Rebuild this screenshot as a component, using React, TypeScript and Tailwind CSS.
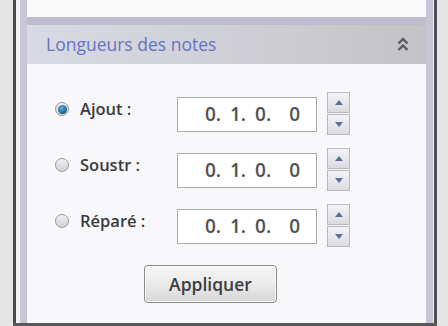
import React from 'react'

function Radio({ checked }: { checked?: boolean }) {
  return (
    <span className="flex h-[14px] w-[14px] items-center justify-center rounded-full border border-[#9a9aa2] bg-gradient-to-b from-[#f2f2f2] to-[#cfcfd4]">
      {checked && <span className="h-[9px] w-[9px] rounded-full bg-[radial-gradient(circle_at_40%_35%,#5fb2da,#1a5f84_70%)]" />}
    </span>
  )
}

function Spinner() {
  const btn = 'flex h-[21px] w-[23px] items-center justify-center border border-[#b9b9be] bg-gradient-to-b from-[#f4f4f6] to-[#dcdce0]'
  return (
    <div className="flex flex-col gap-[1px]">
      <div className={btn}>
        <svg width="8" height="5" viewBox="0 0 8 5"><path d="M0 5L4 0L8 5Z" fill="#5d6c9c" /></svg>
      </div>
      <div className={btn}>
        <svg width="8" height="5" viewBox="0 0 8 5"><path d="M0 0L4 5L8 0Z" fill="#5d6c9c" /></svg>
      </div>
    </div>
  )
}

function Row({ label, checked }: { label: string; checked?: boolean }) {
  return (
    <div className="flex h-[43px] items-start">
      <div className="mt-[6px] flex w-[122px] items-center gap-[11px]">
        <Radio checked={checked} />
        <span className="text-[16.5px] leading-[22px] font-semibold text-[#3a3a3e]">{label}</span>
      </div>
      <div className="mt-[5px] flex h-[35px] w-[140px] items-center justify-end gap-[9px] border border-[#a9a9ae] bg-white pr-[16px] text-[19px] font-semibold text-[#505055]">
        <span>0.</span>
        <span>1.</span>
        <span className="mr-[9px]">0.</span>
        <span>0</span>
      </div>
      <div className="ml-[10px]">
        <Spinner />
      </div>
    </div>
  )
}

export default function App() {
  return (
    <div className="flex h-[326px] w-[448px] bg-[#e6e6e6] font-['Open_Sans','Noto_Sans',sans-serif]">
      <div className="w-[13px]" />
      <div className="flex w-[424px] flex-col">
        <div className="flex flex-1">
          <div className="w-[3px] bg-[#4a4a4a]" />
          <div className="w-[4px] bg-[#f2f2f2]" />
          <div className="flex w-[413px] flex-col border-x-[7px] border-[#c6c6d6] bg-[#f8f8fa]">
            <div className="h-[17px] bg-[#fafafb]" />
            <div className="h-[8px] bg-[#bdbdcf]" />
            <div className="flex h-[39px] items-center justify-between bg-gradient-to-r from-[#d9dae4] via-[#cfcfd6] to-[#c4c4c6] pl-[19px] pr-[17px]">
              <span className="text-[17.5px] font-medium text-[#6672c4]">Longueurs des notes</span>
              <svg width="12" height="15" viewBox="0 0 12 15" fill="none" stroke="#5a5a5e" strokeWidth="2.4">
                <path d="M1.5 6.5L6 2L10.5 6.5" />
                <path d="M1.5 13L6 8.5L10.5 13" />
              </svg>
            </div>
            <div className="flex flex-1 flex-col gap-[13px] pl-[28px] pt-[28px]">
              <Row label="Ajout :" checked />
              <Row label="Soustr :" />
              <Row label="Réparé :" />
              <div className="mt-[5px] pl-[89px]">
                <button className="h-[38px] w-[133px] rounded-[4px] border border-[#8a8a8e] bg-gradient-to-b from-[#f6f6f6] via-[#ebebeb] to-[#d6d6d8] text-[17.5px] font-semibold text-[#3c3c40] shadow-[inset_0_0_0_1px_#fbfbfb]">
                  Appliquer
                </button>
              </div>
            </div>
          </div>
          <div className="w-[1px] bg-[#f0f0f0]" />
          <div className="w-[3px] bg-[#505050]" />
        </div>
        <div className="h-[3px] bg-[#58585c]" />
      </div>
      <div className="flex-1" />
    </div>
  )
}
